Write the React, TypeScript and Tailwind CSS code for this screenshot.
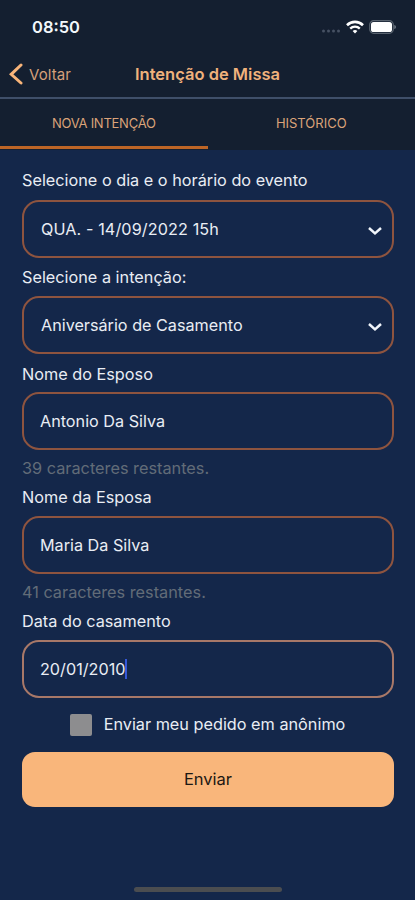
import type { ReactNode } from "react";

const ChevronDown = () => (
  <svg className="relative top-[2px]" width="16" height="10" viewBox="0 0 16 10" fill="none" stroke="#f1f5fb" strokeWidth="2.5">
    <path d="M2 2l6 5.400L14 2" />
  </svg>
);

const Label = ({ children, className = "h-[39px] pb-[1px]" }: { children: ReactNode; className?: string }) => (
  <label className={`flex items-center text-[16.25px] text-[#e9edf4] whitespace-nowrap ${className}`}>
    {children}
  </label>
);

const Field = ({ children, className = "border-[#8e543f]" }: { children: ReactNode; className?: string }) => (
  <div
    className={`flex h-[58px] items-center justify-between rounded-[17px] border-2 pl-4 pr-[9px] text-[16.2px] text-[#e9edf4] whitespace-nowrap ${className}`}
  >
    {children}
  </div>
);

const Hint = ({ children }: { children: ReactNode }) => (
  <p className="flex h-[32px] items-center pt-[5px] text-[16.3px] text-[#626c78] whitespace-nowrap">
    {children}
  </p>
);

const StatusBar = () => (
  <div className="flex h-[52px] items-center justify-between pl-8 pr-[19px] pt-[2px]">
    <span className="pt-px text-[16.500px] font-semibold text-[#f3f7fa]">08:50</span>
    <div className="flex items-center gap-[5px]">
      <svg width="20" height="12" viewBox="0 0 20 12" fill="#465163">
        <circle cx="2.5" cy="10" r="1.5" />
        <circle cx="7.5" cy="10" r="1.5" />
        <circle cx="12.5" cy="10" r="1.5" />
        <circle cx="17.5" cy="10" r="1.5" />
      </svg>
      <svg width="18" height="14" viewBox="0 0 18 14" fill="none" stroke="#ffffff" strokeWidth="2.6">
        <path d="M1 5.2a11.4 11.4 0 0 1 16 0" />
        <path d="M4.2 8.6a6.9 6.9 0 0 1 9.6 0" strokeWidth="2.3" />
        <path d="M9 13.6L6.6 11.1a3.5 3.5 0 0 1 4.8 0z" fill="#ffffff" stroke="none" />
      </svg>
      <svg width="27" height="14" viewBox="0 0 27 14">
        <rect x="0.7" y="0.7" width="23.6" height="12.6" rx="4" fill="none" stroke="#59636f" strokeWidth="1.2" />
        <rect x="2" y="2" width="21" height="10" rx="2.6" fill="#ffffff" />
        <path d="M25.4 5v4c1-.3 1.4-1 1.4-2s-.4-1.700-1.400-2z" fill="#7c8590" />
      </svg>
    </div>
  </div>
);

const Header = () => (
  <header className="bg-[#141f30]">
    <StatusBar />
    <div className="grid h-[47px] grid-cols-[1fr_auto_1fr] items-center border-b-2 border-[#3f4f69] pb-[1px]">
      <button className="flex items-center gap-[6px] pl-[9px] text-[15px] text-[#d5a07a]">
        <svg width="14" height="22" viewBox="0 0 14 22" fill="none" stroke="#f8b479" strokeWidth="3" strokeLinecap="round">
          <path d="M12 2L2.200 11.300L12 20" />
        </svg>
        <span className="pt-[2px] tracking-[0.1px]">Voltar</span>
      </button>
      <h1 className="text-[16.5px] font-semibold text-[#f0b27c] whitespace-nowrap">Intenção de Missa</h1>
      <span />
    </div>
    <nav className="grid h-[51px] grid-cols-2 text-[13px] text-[#dba379]">
      <button className="mb-[1px] border-b-[3px] border-[#bd6526] pt-[3px] tracking-[-0.25px]">NOVA INTENÇÃO</button>
      <button className="mb-[1px] border-b-[3px] border-transparent pt-[3px]">HISTÓRICO</button>
    </nav>
  </header>
);

const App = () => {
  return (
    <div className="flex h-[900px] w-[415px] flex-col overflow-hidden bg-[#14274a] font-['Inter',sans-serif]">
      <Header />
      <main className="flex flex-col pl-[22px] pr-[21px] pt-[11px]">
        <Label>Selecione o dia e o horário do evento</Label>
        <Field>
          <span className="pl-px tracking-[0.1px]">QUA. - 14/09/2022 15h</span>
          <ChevronDown />
        </Field>
        <Label className="h-[38px]">Selecione a intenção:</Label>
        <Field>
          <span className="pl-px">Aniversário de Casamento</span>
          <ChevronDown />
        </Field>
        <Label className="h-[38px] pt-[2px]">Nome do Esposo</Label>
        <Field>Antonio Da Silva</Field>
        <Hint>39 caracteres restantes.</Hint>
        <Label className="h-[34px] pb-[3px]">Nome da Esposa</Label>
        <Field>Maria Da Silva</Field>
        <Hint>41 caracteres restantes.</Hint>
        <Label className="h-[34px] pb-[3px]">Data do casamento</Label>
        <Field className="border-[#a87868]">
          <span className="flex items-center">
            20/01/2010
            <span className="h-5 w-[2px] bg-[#3558d8]" />
          </span>
        </Field>
        <label className="flex h-[54px] items-center justify-center gap-3 pr-[1px] text-[16.25px] text-[#e9edf4]">
          <span className="size-[22px] rounded-[2px] bg-[#8d8d8f]" />
          <span className="pb-px">Enviar meu pedido em anônimo</span>
        </label>
        <button className="h-[55px] rounded-[13px] bg-[#f9b67b] text-[16.5px] text-[#1d1813]">Enviar</button>
      </main>
      <div className="mx-auto mb-2 mt-auto h-[5px] w-[148px] rounded-full bg-[#4b4d50]" />
    </div>
  );
};

export default App;
